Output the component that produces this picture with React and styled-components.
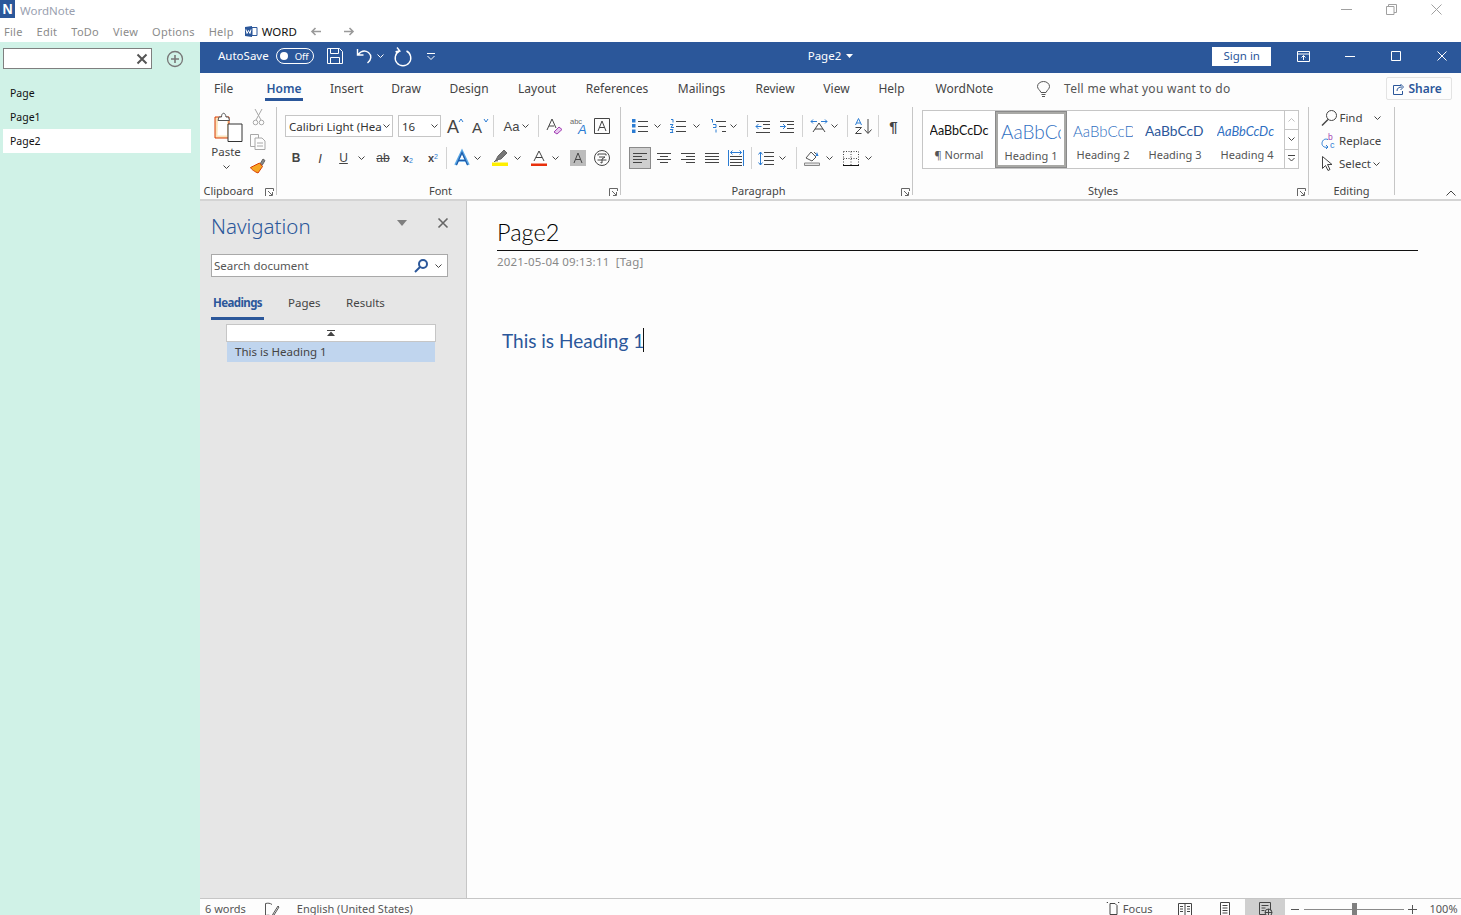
import React from 'react';
import styled, { createGlobalStyle } from 'styled-components';

const GlobalStyle = createGlobalStyle`
  html, body { margin: 0; padding: 0; background: #fff; }
  body { font-family: "Noto Sans", "Open Sans", sans-serif; }
  * { box-sizing: border-box; }
`;

const Window = styled.div`
  width: 1461px;
  height: 915px;
  overflow: hidden;
  display: flex;
  flex-direction: column;
  background: #fff;
`;

const TitleBar = styled.div`
  height: 20px;
  display: flex;
  align-items: flex-start;
`;

const Logo = styled.div`
  width: 15px;
  height: 18px;
  background: #2b579a;
  color: #fff;
  font: bold 14px/18px "Liberation Sans", sans-serif;
  text-align: center;
`;

const AppName = styled.span`
  margin-left: 5px;
  font-size: 11.5px;
  line-height: 21px;
  color: #9a9fb0;
`;

const WinControls = styled.div`
  margin-left: auto;
  display: flex;
  gap: 34px;
  padding: 4px 19px 0 0;
`;

const MenuBar = styled.div`
  height: 22px;
  display: flex;
  align-items: center;
  padding-left: 4px;
  font-size: 11px;
  color: #8b8b8b;
  letter-spacing: 0.25px;
`;

const MenuItem = styled.span`
  margin-right: 14px;
`;

const WordLink = styled.span`
  margin-left: -3px;
  display: flex;
  align-items: center;
  gap: 5px;
  color: #111;
  font-size: 11.5px;
  letter-spacing: 0;
`;

const ArrowSlot = styled.span`
  display: flex;
  margin-left: ${p => p.$ml}px;
`;

const Main = styled.div`
  flex: 1;
  min-height: 0;
  display: flex;
`;

const Sidebar = styled.aside`
  width: 200px;
  background: #d0f2e7;
  padding: 6px 0 0 3px;
`;

const SearchRow = styled.div`
  display: flex;
  align-items: center;
  height: 21px;
`;

const SideSearch = styled.div`
  width: 149px;
  height: 21px;
  background: #fff;
  border: 1px solid #7f7f7f;
  display: flex;
  align-items: center;
  justify-content: flex-end;
  padding-right: 4px;
`;

const AddButton = styled.span`
  display: flex;
  margin-left: 15px;
`;

const PageList = styled.div`
  margin-top: 12px;
  width: 188px;
`;

const PageItem = styled.div`
  height: 24px;
  line-height: 24px;
  padding-left: 7px;
  font-size: 10.5px;
  color: #111;
  background: ${p => (p.$active ? '#fff' : 'transparent')};
`;

const WordPane = styled.div`
  flex: 1;
  min-width: 0;
  display: flex;
  flex-direction: column;
`;

const BlueBar = styled.div`
  height: 31px;
  flex: none;
  background: #2b579a;
  color: #fff;
  display: flex;
  align-items: center;
  padding-bottom: 3px;
  font-size: 11.5px;
`;

const BarSlot = styled.span`
  display: flex;
  align-items: center;
  margin-left: ${p => p.$ml}px;
  padding-bottom: ${p => (p.$text ? '2px' : '0')};
`;

const Toggle = styled.span`
  width: 38px;
  height: 16px;
  border: 1px solid #fff;
  border-radius: 8px;
  display: flex;
  align-items: center;
  gap: 7px;
  padding-left: 3px;
  font-size: 9.5px;
  &::before {
    content: '';
    width: 8px;
    height: 8px;
    border-radius: 50%;
    background: #fff;
  }
`;

const SignIn = styled.span`
  width: 59px;
  height: 19px;
  margin-left: ${p => p.$ml}px;
  background: #fff;
  color: #2b579a;
  text-align: center;
  line-height: 17px;
  font-size: 11.5px;
`;

const TabRow = styled.div`
  height: 31px;
  flex: none;
  background: #fdfdfd;
  display: flex;
  align-items: flex-start;
  font-size: 12px;
  color: #444;
`;

const Tab = styled.span`
  margin-left: ${p => p.$ml}px;
  width: ${p => p.$w}px;
  height: 28px;
  text-align: center;
  line-height: 31px;
  white-space: nowrap;
  ${p => p.$active && `
    color: #2b579a;
    font-weight: 600;
    border-bottom: 3px solid #2b579a;
  `}
`;

const TellMe = styled.span`
  margin-left: 14px;
  line-height: 31px;
  color: #555;
  letter-spacing: 0.3px;
`;

const Bulb = styled.span`
  margin: 8px 0 0 42px;
  display: flex;
`;

const ShareButton = styled.span`
  margin: 4px 0 0 156px;
  width: 66px;
  height: 23px;
  border: 1px solid #e3e3e3;
  border-radius: 2px;
  color: #2b579a;
  font-weight: 600;
  display: flex;
  align-items: center;
  padding-left: 6px;
  gap: 3px;
`;

const Ribbon = styled.div`
  height: 97px;
  flex: none;
  background: #fdfdfd;
  border-bottom: 2px solid #d4d4d4;
  display: flex;
  position: relative;
`;

const Group = styled.section`
  width: ${p => p.$w}px;
  flex: none;
  display: flex;
  flex-direction: column;
  position: relative;
  padding-top: 11px;
`;

const GroupLabel = styled.div`
  position: absolute;
  left: 0;
  right: 0;
  bottom: 1px;
  height: 15px;
  line-height: 15px;
  text-align: center;
  padding-right: ${p => p.$pr || 0}px;
  font-size: 11px;
  color: #444;
`;

const Launcher = styled.span`
  position: absolute;
  right: 2px;
  bottom: 2px;
  display: flex;
`;

const GroupDivider = styled.div`
  width: 1px;
  flex: none;
  margin: 3px 0 4px;
  background: #c6c6c6;
`;

const ToolRow = styled.div`
  height: 22px;
  display: flex;
  align-items: center;
  margin-bottom: 10px;
`;

const Tool = styled.span`
  flex: none;
  display: flex;
  align-items: center;
  justify-content: center;
  width: ${p => p.$w}px;
  height: ${p => (p.$on ? '22px' : 'auto')};
  margin-left: ${p => p.$ml}px;
  background: ${p => (p.$on ? '#cfcfcf' : 'transparent')};
  border: ${p => (p.$on ? '1px solid #8a8a8a' : 'none')};
  color: #444;
`;

const ToolSep = styled.span`
  flex: none;
  width: 1px;
  height: 22px;
  margin-left: ${p => p.$ml}px;
  background: #d2d2d2;
`;

const Combo = styled.span`
  flex: none;
  height: 22px;
  width: ${p => p.$w}px;
  margin-left: ${p => p.$ml}px;
  border: 1px solid #c6c6c6;
  background: #fff;
  display: flex;
  align-items: center;
  justify-content: space-between;
  padding: 0 2px 0 3px;
  font-size: 11.5px;
  color: #333;
  white-space: nowrap;
`;

const FormatLetter = styled.span`
  font-family: "Liberation Sans", sans-serif;
  font-size: ${p => p.$size || 13}px;
  font-weight: ${p => (p.$bold ? 700 : 400)};
  font-style: ${p => (p.$italic ? 'italic' : 'normal')};
  text-decoration: ${p => p.$deco || 'none'};
  color: #444;
  line-height: 1;
`;

const Sup = styled.span`
  font-size: 7px;
  color: #2b7cd3;
  align-self: ${p => (p.$up ? 'flex-start' : 'flex-end')};
  font-family: "Liberation Sans", sans-serif;
`;

const ClipColumn = styled.div`
  display: flex;
  padding-left: 14px;
`;

const PasteColumn = styled.div`
  width: 30px;
  display: flex;
  flex-direction: column;
  margin-top: -4px;
`;

const PasteCaption = styled.div`
  width: 24px;
  display: flex;
  flex-direction: column;
  align-items: center;
  gap: 5px;
  margin-top: 2px;
  font-size: 11.5px;
  line-height: 16px;
  color: #444;
`;

const ClipTools = styled.div`
  margin: -6px 0 0 6px;
  display: flex;
  flex-direction: column;
  gap: 8px;
  align-items: center;
  width: 16px;
`;

const Gallery = styled.div`
  margin: -5px 0 0 9px;
  width: 377px;
  height: 59px;
  border: 1px solid #c6c6c6;
  background: #fff;
  display: flex;
`;

const StyleCard = styled.div`
  width: 72px;
  flex: none;
  height: 57px;
  display: flex;
  flex-direction: column;
  align-items: center;
  padding-top: ${p => (p.$active ? '8px' : '10px')};
  border: ${p => (p.$active ? '3px solid #a9a9a6' : 'none')};
  outline: ${p => (p.$active ? '1px solid #8a8a8a' : 'none')};
  outline-offset: -1px;
`;

const StylePreview = styled.div`
  width: ${p => p.$w}px;
  height: 20px;
  overflow: hidden;
  white-space: nowrap;
  line-height: 20px;
  font-family: Lato, "Liberation Sans", sans-serif;
  font-weight: ${p => p.$weight || 400};
  font-style: ${p => (p.$italic ? 'italic' : 'normal')};
  font-size: ${p => p.$size}px;
  color: ${p => p.$color};
`;

const StyleName = styled.div`
  margin-top: 6px;
  font-size: 11px;
  line-height: 16px;
  color: #555;
`;

const GalleryScroll = styled.div`
  width: 14px;
  display: flex;
  flex-direction: column;
  margin-left: auto;
`;

const ScrollBtn = styled.span`
  flex: 1;
  display: flex;
  align-items: center;
  justify-content: center;
  border-left: 1px solid #c6c6c6;
  border-top: ${p => (p.$first ? 'none' : '1px solid #c6c6c6')};
`;

const EditColumn = styled.div`
  margin-top: -9px;
`;

const EditItem = styled.div`
  height: 23px;
  display: flex;
  align-items: center;
  gap: 2px;
  padding-left: 12px;
  font-size: 11.5px;
  color: #444;
`;

const EditIcon = styled.span`
  width: 16px;
  flex: none;
  display: flex;
`;

const CollapseRibbon = styled.span`
  position: absolute;
  right: 5px;
  bottom: 3px;
  display: flex;
`;

const Workspace = styled.div`
  flex: 1;
  min-height: 0;
  display: flex;
`;

const NavPane = styled.div`
  width: 267px;
  flex: none;
  background: #e6e6e6;
  border-right: 1px solid #c6c6c6;
  padding: 0 18px 0 11px;
`;

const NavHead = styled.div`
  height: 53px;
  display: flex;
  align-items: center;
  padding-bottom: 3px;
`;

const NavTitle = styled.span`
  font-size: 20.5px;
  color: #2b579a;
  font-weight: 300;
  flex: 1;
`;

const NavHeadIcon = styled.span`
  display: flex;
  margin-right: ${p => p.$mr}px;
  margin-top: -7px;
`;

const NavSearch = styled.div`
  height: 23px;
  width: 237px;
  border: 1px solid #a9a9a9;
  background: #fff;
  display: flex;
  align-items: center;
  padding: 0 5px 0 2px;
  font-size: 11.5px;
  color: #555;
`;

const NavSearchText = styled.span`
  flex: 1;
`;

const NavTabs = styled.div`
  display: flex;
  margin-top: 16px;
  height: 27px;
  font-size: 11.5px;
  color: #444;
`;

const NavTab = styled.span`
  height: 27px;
  line-height: 19px;
  width: ${p => p.$w}px;
  margin-right: ${p => p.$mr}px;
  text-align: center;
  white-space: nowrap;
  ${p => p.$active && `
    color: #2b579a;
    font-weight: 700;
    letter-spacing: -0.6px;
    border-bottom: 3px solid #2b579a;
  `}
`;

const HeadingTree = styled.div`
  margin: 4px 0 0 15px;
  width: 210px;
`;

const CollapseAll = styled.div`
  height: 18px;
  background: #fff;
  border: 1px solid #c6c6c6;
  display: flex;
  align-items: center;
  justify-content: center;
`;

const TreeRow = styled.div`
  height: 20px;
  margin: 0 1px;
  line-height: 20px;
  padding-left: 8px;
  font-size: 11.5px;
  background: #c0d5ee;
  color: #444;
`;

const Doc = styled.main`
  flex: 1;
  min-width: 0;
  background: #fdfdfd;
  padding: 14px 43px 0 30px;
`;

const DocTitle = styled.div`
  height: 36px;
  border-bottom: 1px solid #111;
  font-family: Lato, "Liberation Sans", sans-serif;
  font-weight: 300;
  font-size: 23.5px;
  line-height: 35px;
  color: #000;
`;

const DocMeta = styled.div`
  margin-top: 3px;
  font-size: 11.5px;
  line-height: 15px;
  letter-spacing: 0.2px;
  color: #888;
  white-space: pre;
`;

const DocHeading = styled.div`
  margin: 59px 0 0 5px;
  height: 24px;
  display: flex;
  align-items: center;
  font-family: Lato, "Liberation Sans", sans-serif;
  font-weight: 400;
  font-size: 19px;
  color: #2b579a;
`;

const Caret = styled.span`
  width: 1px;
  height: 24px;
  background: #111;
  margin-left: -1px;
`;

const StatusBar = styled.footer`
  height: 21px;
  margin-bottom: -4px;
  flex: none;
  background: #fdfdfd;
  border-top: 1px solid #c6c6c6;
  display: flex;
  align-items: center;
  font-size: 11px;
  line-height: 12px;
  color: #555;
  padding-left: 5px;
`;

const StatusSlot = styled.span`
  display: flex;
  align-items: center;
  gap: 3px;
  height: 100%;
  justify-content: center;
  margin-left: ${p => p.$ml || 0}px;
  width: ${p => (p.$w ? `${p.$w}px` : 'auto')};
  background: ${p => (p.$on ? '#cfcfcf' : 'transparent')};
`;

const ZoomTrack = styled.span`
  width: 100px;
  height: 1px;
  margin-left: 5px;
  background: #8a8a8a;
  position: relative;
  &::after {
    content: '';
    position: absolute;
    left: 48px;
    top: -6px;
    width: 5px;
    height: 12px;
    background: #7f7f7f;
  }
`;

const Ico = styled.svg`
  display: block;
  flex: none;
  overflow: visible;
`;

const Svg = ({ w, h, children, stroke = '#444', fill = 'none', sw = 1 }) => (
  <Ico width={w} height={h} viewBox={`0 0 ${w} ${h}`} fill={fill} stroke={stroke} strokeWidth={sw}>
    {children}
  </Ico>
);

const Chev = ({ color = '#444' }) => (
  <Svg w={7} h={4} stroke={color}><path d="M.5.5l3 3 3-3" /></Svg>
);

const Launch = () => (
  <Svg w={9} h={9} stroke="#666">
    <path d="M.5 8V.5H8.500V3M3 3l4 4M4 7.500h3.500V4" />
  </Svg>
);

// word icons
const Lines = ({ rows, x1 = 0, x2 = 14 }) => (
  <path d={rows.map(([y, a = x1, b = x2]) => `M${a} ${y}.5H${b}`).join('')} />
);

const Undo = () => (
  <Svg w={18} h={18} stroke="#fff" sw={1.4}>
    <path d="M1.500 2v6h6M2 7.500C5 4 9 3 12.500 5.500c3.500 3 3 7-1 10.500" />
  </Svg>
);

const Redo = () => (
  <Svg w={18} h={18} stroke="#fff" sw={1.4}>
    <path d="M12.500 4a7.800 7.800 0 1 1-7 0M3 .5l2.800 3.500-4.300.8" />
  </Svg>
);

const AIcon = ({ arrow, size = 18 }) => (
  <Svg w={16} h={16} stroke="none">
    <text x="0" y="15" fontFamily="Liberation Sans" fontSize={size} fill="#444">A</text>
    <path d={arrow === 'up' ? 'M12 4l2-3 2 3' : 'M12 1l2 3 2-3'} fill="none" stroke="#2b7cd3" />
  </Svg>
);

const TextEffect = () => (
  <Svg w={16} h={16} stroke="#59a8e6" sw={2.6}>
    <path d="M1.500 15L8 1.500 14.500 15M4.500 10.500h7" />
    <path d="M2.500 15L8 2.500 13.500 15M4.500 10.500h7" stroke="#1f5aa8" strokeWidth={1.2} />
  </Svg>
);

const ColorA = ({ bar }) => (
  <Svg w={16} h={16} stroke="#444">
    <path d="M3 11L8 1l5 10M5 7.500h6" />
    <path d="M0 13.500h16v2.500H0z" fill={bar} stroke="none" />
  </Svg>
);

const Highlight = () => (
  <Svg w={16} h={16} stroke="#666">
    <path d="M4 10l2-4 6-6 3 3-6 6zM2 12l2-2 2 1" fill="#777" />
    <path d="M0 12.500h16V16H0z" fill="#ffef00" stroke="none" />
  </Svg>
);

const Bullets = () => (
  <Svg w={16} h={14}>
    <Lines rows={[[2, 6, 16], [7, 6, 16], [12, 6, 16]]} />
    <path d="M0 0h3.500v3.500H0zM0 5h3.500v3.500H0zM0 10.500h3.500V14H0z" fill="#2b7cd3" stroke="none" />
  </Svg>
);

const Numbers = () => (
  <Svg w={16} h={14}>
    <Lines rows={[[2, 6, 16], [7, 6, 16], [12, 6, 16]]} />
    <path d="M1 .5h2v3M0 5.500h3l-2 3h3M0 10.500h3l-1 1.500 1 1.500H0" stroke="#2b7cd3" />
  </Svg>
);

const Multilevel = () => (
  <Svg w={16} h={14}>
    <Lines rows={[[2, 6, 16], [7, 9, 16], [12, 12, 16]]} />
    <path d="M1 .5h1.500v3M3 5.500h3v3H3M6 10.500v3" stroke="#2b7cd3" />
  </Svg>
);

const Indent = ({ rev }) => (
  <Svg w={14} h={13}>
    <Lines rows={[[1], [4, 7, 14], [8, 7, 14], [12]]} />
    <path d={rev ? 'M5.500 6.500H0M2.500 4L0 6.500 2.500 9' : 'M0 6.500h5.500M3 4l2.500 2.500L3 9'} stroke="#2b7cd3" />
  </Svg>
);

const Asian = () => (
  <Svg w={18} h={14}>
    <path d="M3 13L9 4l6 9M5 10h8" />
    <path d="M1 2.500h6M3 .5l-2 2 2 2M17 2.500h-6M15 .5l2 2-2 2" stroke="#2b7cd3" />
  </Svg>
);

const Sort = () => (
  <Svg w={17} h={16} stroke="#444">
    <path d="M.5 7L3.500 .5 6.500 7M1.500 5h4" stroke="#2b7cd3" />
    <path d="M.5 9.500h6L.5 15.500h6M13 1v14M9.500 11.500L13 15.500l3.500-4" />
  </Svg>
);

const Align = ({ rows }) => (
  <Svg w={14} h={12}><Lines rows={rows} /></Svg>
);

const Distributed = () => (
  <Svg w={16} h={16}>
    <Lines rows={[[6, 2, 14], [9, 2, 14], [12, 2, 14], [15, 2, 14]]} />
    <path d="M.5 0v16M15.500 0v16M2.500 2.500h11M4.500 .5l-2 2 2 2M11.500 .5l2 2-2 2" stroke="#2b7cd3" />
  </Svg>
);

const LineSpacing = () => (
  <Svg w={16} h={15}>
    <Lines rows={[[1, 6, 16], [5, 6, 16], [9, 6, 16], [13, 6, 16]]} />
    <path d="M2.500 1v13M.5 3.500l2-2.500 2 2.500M.5 11.500l2 2.500 2-2.500" stroke="#2b7cd3" />
  </Svg>
);

const Shading = () => (
  <Svg w={16} h={16} stroke="#555">
    <path d="M2 8l5-6 5 5-4 4zM10 2l2 2" />
    <path d="M13 2l1.500 4-3 0z" fill="#2b7cd3" stroke="none" />
    <path d="M.5 13h15v2.500H.5z" fill="#e6e6e6" stroke="#888" />
  </Svg>
);

const Borders = () => (
  <Svg w={16} h={15}>
    <path d="M.5 .5h15M.5 .5v14M15.500 .5v14M8 .5v14M.5 7.500h15" strokeDasharray="1 1.500" />
    <path d="M0 14.500h16" stroke="#111" />
  </Svg>
);

const Paste = () => (
  <Svg w={30} h={31} stroke="#555">
    <path d="M1 6h14v21H1z" fill="#fbe3bb" stroke="#d83b01" />
    <path d="M4 7.500h9v17H3.500z" fill="#fff" stroke="none" />
    <path d="M5 6h2.500c0-5 4-5 4.500 0h2.500l1 3.500H4z" fill="#fff" />
    <path d="M14 13h14v17.500H14z" fill="#fff" stroke="#333" />
  </Svg>
);

const Scissors = () => (
  <Svg w={11} h={17} stroke="#a8a8a8">
    <path d="M2 0l6 11M9 0L3 11" />
    <circle cx="2.500" cy="13.500" r="2.300" />
    <circle cx="8.500" cy="13.500" r="2.300" />
  </Svg>
);

const Copy = () => (
  <Svg w={16} h={16} stroke="#a8a8a8">
    <path d="M.5 .5h8v12H.5z" />
    <path d="M5 4h7l3 3v8.500H5z" fill="#fdfdfd" />
    <path d="M7 9h6M7 12h6" />
  </Svg>
);

const Painter = () => (
  <Svg w={16} h={16} stroke="#666">
    <path d="M10 6l3-5 2 1.500-3 5z" fill="#888" />
    <path d="M3.500 8l6-3 3 3.500-4.500 6.500C5 14 1 11 .5 9.500z" fill="#f6a623" stroke="#d83b01" />
  </Svg>
);

const Search = () => (
  <Svg w={14} h={14} stroke="#2b579a" sw={2}>
    <circle cx="9" cy="5" r="4" />
    <path d="M6 8l-5 5" />
  </Svg>
);

const Find = () => (
  <Svg w={16} h={16} stroke="#444">
    <circle cx="10.500" cy="5.500" r="5" />
    <path d="M7 9.500l-6 6" strokeWidth={1.4} />
  </Svg>
);

const Close = ({ size = 10, color = '#555', sw = 1.6 }) => (
  <Svg w={size} h={size} stroke={color} sw={sw}>
    <path d={`M.5 .5L${size - 0.5} ${size - 0.5}M${size - 0.5} .5L.5 ${size - 0.5}`} />
  </Svg>
);

const Row1Font = () => (
  <ToolRow>
    <Combo $w={108} $ml={8}>
      Calibri Light (Hea
      <Chev />
    </Combo>
    <Combo $w={43} $ml={5}>
      16
      <Chev />
    </Combo>
    <Tool $w={16} $ml={6}><AIcon arrow="up" /></Tool>
    <Tool $w={16} $ml={9}><AIcon arrow="down" size={15} /></Tool>
    <ToolSep $ml={5} />
    <Tool $w={19} $ml={8}><FormatLetter $size={13}>Aa</FormatLetter></Tool>
    <Tool $w={7} $ml={1}><Chev /></Tool>
    <ToolSep $ml={9} />
    <Tool $w={16} $ml={7}>
      <Svg w={16} h={16}>
        <path d="M1 12L6 1l4 9M3 8h5" />
        <path d="M8 14l5-5 3 2.500-5 4.500z" fill="#e6c6ee" stroke="#a33fb3" />
      </Svg>
    </Tool>
    <Tool $w={17} $ml={8}>
      <Svg w={17} h={16} stroke="none">
        <text x="0" y="6" fontFamily="Liberation Sans" fontSize="7.500" fill="#666">abc</text>
        <text x="8" y="16" fontFamily="Liberation Sans" fontStyle="italic" fontSize="13" fill="#2b7cd3">A</text>
      </Svg>
    </Tool>
    <Tool $w={16} $ml={7}>
      <Svg w={16} h={16}>
        <path d="M.5 .5h15v15H.5z" />
        <path d="M4 13l4-10 4 10M5.500 9.500h5" />
      </Svg>
    </Tool>
  </ToolRow>
);

const Row2Font = () => (
  <ToolRow>
    <Tool $w={10} $ml={14}><FormatLetter $bold $size={12}>B</FormatLetter></Tool>
    <Tool $w={8} $ml={15}><FormatLetter $italic $size={13}>I</FormatLetter></Tool>
    <Tool $w={11} $ml={14}><FormatLetter $deco="underline" $size={12}>U</FormatLetter></Tool>
    <Tool $w={7} $ml={9}><Chev /></Tool>
    <Tool $w={16} $ml={10}><FormatLetter $deco="line-through" $size={12}>ab</FormatLetter></Tool>
    <Tool $w={12} $ml={11}><FormatLetter $bold $size={11}>x</FormatLetter><Sup>2</Sup></Tool>
    <Tool $w={12} $ml={13}><FormatLetter $bold $size={11}>x</FormatLetter><Sup $up>2</Sup></Tool>
    <ToolSep $ml={7} />
    <Tool $w={16} $ml={7}><TextEffect /></Tool>
    <Tool $w={7} $ml={4}><Chev /></Tool>
    <Tool $w={16} $ml={11}><Highlight /></Tool>
    <Tool $w={7} $ml={6}><Chev /></Tool>
    <Tool $w={16} $ml={10}><ColorA bar="#e8300c" /></Tool>
    <Tool $w={7} $ml={5}><Chev /></Tool>
    <Tool $w={16} $ml={11}>
      <Svg w={16} h={16} stroke="#444">
        <path d="M0 0h16v16H0z" fill="#bcbcbc" stroke="none" />
        <path d="M4 13l4-10 4 10M5.500 9.500h5" />
      </Svg>
    </Tool>
    <Tool $w={16} $ml={8}>
      <Svg w={16} h={16}>
        <circle cx="8" cy="8" r="7.500" />
        <path d="M4 5.500V4h8v1.500M5 7h6l-3 2v4l-1.500-.5M3.500 10h9" />
      </Svg>
    </Tool>
  </ToolRow>
);

const Row1Para = () => (
  <ToolRow>
    <Tool $w={16} $ml={11}><Bullets /></Tool>
    <Tool $w={7} $ml={6}><Chev /></Tool>
    <Tool $w={16} $ml={9}><Numbers /></Tool>
    <Tool $w={7} $ml={7}><Chev /></Tool>
    <Tool $w={16} $ml={10}><Multilevel /></Tool>
    <Tool $w={7} $ml={4}><Chev /></Tool>
    <ToolSep $ml={10} />
    <Tool $w={14} $ml={8}><Indent rev /></Tool>
    <Tool $w={14} $ml={10}><Indent /></Tool>
    <ToolSep $ml={8} />
    <Tool $w={18} $ml={7}><Asian /></Tool>
    <Tool $w={7} $ml={3}><Chev /></Tool>
    <ToolSep $ml={9} />
    <Tool $w={17} $ml={7}><Sort /></Tool>
    <ToolSep $ml={6} />
    <Tool $w={11} $ml={9}><FormatLetter $bold $size={15}>¶</FormatLetter></Tool>
  </ToolRow>
);

const Row2Para = () => (
  <ToolRow>
    <Tool $w={22} $ml={8} $on>
      <Align rows={[[1], [4, 0, 9], [7], [10, 0, 9]]} />
    </Tool>
    <Tool $w={14} $ml={6}><Align rows={[[1], [4, 3, 11], [7], [10, 3, 11]]} /></Tool>
    <Tool $w={14} $ml={10}><Align rows={[[1], [4, 5, 14], [7], [10, 5, 14]]} /></Tool>
    <Tool $w={14} $ml={10}><Align rows={[[1], [4], [7], [10]]} /></Tool>
    <Tool $w={16} $ml={9}><Distributed /></Tool>
    <ToolSep $ml={7} />
    <Tool $w={16} $ml={6}><LineSpacing /></Tool>
    <Tool $w={7} $ml={5}><Chev /></Tool>
    <ToolSep $ml={10} />
    <Tool $w={16} $ml={7}><Shading /></Tool>
    <Tool $w={7} $ml={6}><Chev /></Tool>
    <Tool $w={16} $ml={10}><Borders /></Tool>
    <Tool $w={7} $ml={6}><Chev /></Tool>
  </ToolRow>
);

const App = () => (
  <Window>
    <GlobalStyle />
    <TitleBar>
      <Logo>N</Logo>
      <AppName>WordNote</AppName>
      <WinControls>
        <Svg w={11} h={11} stroke="#a0a0a0"><path d="M0 5.500h11" /></Svg>
        <Svg w={11} h={11} stroke="#a0a0a0"><path d="M.5 2.500h7.500v8H.5zM2.500 2.500V.5h8v8H8" /></Svg>
        <Close size={11} color="#a0a0a0" sw={1} />
      </WinControls>
    </TitleBar>
    <MenuBar>
      <MenuItem>File</MenuItem>
      <MenuItem>Edit</MenuItem>
      <MenuItem>ToDo</MenuItem>
      <MenuItem>View</MenuItem>
      <MenuItem>Options</MenuItem>
      <MenuItem>Help</MenuItem>
      <WordLink>
        <Svg w={12} h={11} stroke="none">
          <path d="M0 1l7-1v11l-7-1z" fill="#2b579a" />
          <path d="M7 1.500h5v8H7z" fill="#fff" stroke="#2b579a" />
          <path d="M1 3.500l1 4 1.500-3 1.500 3 1-4" fill="none" stroke="#fff" />
        </Svg>
        WORD
      </WordLink>
      <ArrowSlot $ml={14}>
        <Svg w={10} h={9} stroke="#9a9a9a" sw={1.6}><path d="M10 4.500H1M4.500 1L1 4.500 4.500 8" /></Svg>
      </ArrowSlot>
      <ArrowSlot $ml={23}>
        <Svg w={10} h={9} stroke="#9a9a9a" sw={1.6}><path d="M0 4.500h9M5.500 1L9 4.500 5.500 8" /></Svg>
      </ArrowSlot>
    </MenuBar>
    <Main>
      <Sidebar>
        <SearchRow>
          <SideSearch><Close size={10} color="#555" sw={2} /></SideSearch>
          <AddButton>
            <Svg w={16} h={16} stroke="#777" sw={1.3}>
              <circle cx="8" cy="8" r="7.500" />
              <path d="M8 4v8M4 8h8" strokeWidth={1.6} />
            </Svg>
          </AddButton>
        </SearchRow>
        <PageList>
          <PageItem>Page</PageItem>
          <PageItem>Page1</PageItem>
          <PageItem $active>Page2</PageItem>
        </PageList>
      </Sidebar>
      <WordPane>
        <BlueBar>
          <BarSlot $ml={18} $text>AutoSave</BarSlot>
          <BarSlot $ml={7}><Toggle>Off</Toggle></BarSlot>
          <BarSlot $ml={13}>
            <Svg w={16} h={16} stroke="#fff">
              <path d="M.5 .5h12l3 3v12H.5zM3.500 .5v5h8v-5M3.500 15.500v-6h9v6" />
            </Svg>
          </BarSlot>
          <BarSlot $ml={13}><Undo /></BarSlot>
          <BarSlot $ml={3}><Chev color="#fff" /></BarSlot>
          <BarSlot $ml={10}><Redo /></BarSlot>
          <BarSlot $ml={15}>
            <Svg w={8} h={7} stroke="#fff"><path d="M0 .5h8M.5 3l3.500 3.500L7.500 3" /></Svg>
          </BarSlot>
          <BarSlot $ml={373} $text>Page2</BarSlot>
          <BarSlot $ml={5}>
            <Svg w={7} h={4} stroke="none" fill="#fff"><path d="M0 0h7L3.500 4z" /></Svg>
          </BarSlot>
          <SignIn $ml={359}>Sign in</SignIn>
          <BarSlot $ml={26}>
            <Svg w={13} h={11} stroke="#fff">
              <path d="M.5 .5h12v10H.5zM.5 3h12M6.500 9V4.500M4.500 6.500l2-2 2 2" />
            </Svg>
          </BarSlot>
          <BarSlot $ml={35}><Svg w={10} h={1} stroke="#fff"><path d="M0 .5h10" /></Svg></BarSlot>
          <BarSlot $ml={36}><Svg w={10} h={10} stroke="#fff"><path d="M.5 .5h9v9h-9z" /></Svg></BarSlot>
          <BarSlot $ml={36}><Close size={10} color="#fff" sw={1} /></BarSlot>
        </BlueBar>
        <TabRow>
          <Tab $ml={14} $w={19}>File</Tab>
          <Tab $ml={32} $w={38} $active>Home</Tab>
          <Tab $ml={27} $w={32}>Insert</Tab>
          <Tab $ml={29} $w={30}>Draw</Tab>
          <Tab $ml={28} $w={40}>Design</Tab>
          <Tab $ml={29} $w={38}>Layout</Tab>
          <Tab $ml={29} $w={64}>References</Tab>
          <Tab $ml={28} $w={49}>Mailings</Tab>
          <Tab $ml={29} $w={40}>Review</Tab>
          <Tab $ml={28} $w={27}>View</Tab>
          <Tab $ml={28} $w={27}>Help</Tab>
          <Tab $ml={29} $w={61}>WordNote</Tab>
          <Bulb>
            <Svg w={13} h={16} stroke="#555">
              <path d="M4 11.500C3 9 .5 8 .5 5.500a6 5 0 0 1 12 0c0 2.500-2.500 3.500-3.500 6zM4.500 13.500h4M5 15.500h3" />
            </Svg>
          </Bulb>
          <TellMe>Tell me what you want to do</TellMe>
          <ShareButton>
            <Svg w={12} h={12} stroke="#2b579a">
              <path d="M8 2.500H.5v9h9V8M4 8c0-3 2-4 5-4M7.500 1L10.500 4 7.500 7" />
            </Svg>
            Share
          </ShareButton>
        </TabRow>
        <Ribbon>
          <Group $w={76}>
            <ClipColumn>
              <PasteColumn>
                <Paste />
                <PasteCaption>
                  Paste
                  <Chev />
                </PasteCaption>
              </PasteColumn>
              <ClipTools>
                <Scissors />
                <Copy />
                <Painter />
              </ClipTools>
            </ClipColumn>
            <GroupLabel $pr={19}>Clipboard</GroupLabel>
            <Launcher><Launch /></Launcher>
          </Group>
          <GroupDivider />
          <Group $w={343}>
            <Row1Font />
            <Row2Font />
            <GroupLabel $pr={16}>Font</GroupLabel>
            <Launcher><Launch /></Launcher>
          </Group>
          <GroupDivider />
          <Group $w={291}>
            <Row1Para />
            <Row2Para />
            <GroupLabel $pr={16}>Paragraph</GroupLabel>
            <Launcher><Launch /></Launcher>
          </Group>
          <GroupDivider />
          <Group $w={395}>
            <Gallery>
              <StyleCard>
                <StylePreview $w={59} $size={12.5} $color="#111">AaBbCcDc</StylePreview>
                <StyleName>¶ Normal</StyleName>
              </StyleCard>
              <StyleCard $active>
                <StylePreview $w={60} $size={19} $weight={300} $color="#2f6fc2">AaBbCc</StylePreview>
                <StyleName>Heading 1</StyleName>
              </StyleCard>
              <StyleCard>
                <StylePreview $w={60} $size={15} $weight={300} $color="#2f6fc2">AaBbCcD</StylePreview>
                <StyleName>Heading 2</StyleName>
              </StyleCard>
              <StyleCard>
                <StylePreview $w={60} $size={13.8} $color="#2b579a">AaBbCcD</StylePreview>
                <StyleName>Heading 3</StyleName>
              </StyleCard>
              <StyleCard>
                <StylePreview $w={60} $size={12.8} $italic $color="#2f6fc2">AaBbCcDc</StylePreview>
                <StyleName>Heading 4</StyleName>
              </StyleCard>
              <GalleryScroll>
                <ScrollBtn $first><Svg w={7} h={4} stroke="#c0c0c0"><path d="M.5 3.500l3-3 3 3" /></Svg></ScrollBtn>
                <ScrollBtn><Chev /></ScrollBtn>
                <ScrollBtn>
                  <Svg w={7} h={7}><path d="M0 .5h7M.5 3l3 3 3-3" /></Svg>
                </ScrollBtn>
              </GalleryScroll>
            </Gallery>
            <GroupLabel $pr={15}>Styles</GroupLabel>
            <Launcher><Launch /></Launcher>
          </Group>
          <GroupDivider />
          <Group $w={85}>
            <EditColumn>
              <EditItem>
                <EditIcon><Find /></EditIcon>
                <Tool $w={24} $ml={0}>Find</Tool>
                <Tool $w={7} $ml={9}><Chev /></Tool>
              </EditItem>
              <EditItem>
                <EditIcon>
                  <Svg w={16} h={16} stroke="none">
                    <text x="7" y="7" fontFamily="Liberation Sans" fontSize="8.500" fill="#a33fb3">b</text>
                    <text x="9" y="15" fontFamily="Liberation Sans" fontSize="9" fill="#2b7cd3">c</text>
                    <path d="M7 6.500C3 5 1 8 1 10.500c0 3 3 4.500 6 3.500M5 12l2 2-2 2" fill="none" stroke="#2b7cd3" />
                  </Svg>
                </EditIcon>
                Replace
              </EditItem>
              <EditItem>
                <EditIcon>
                  <Svg w={14} h={15} fill="#fdfdfd">
                    <path d="M1.500 .5v12l3-3 2.500 5 2-1-2.500-5h4.500z" />
                  </Svg>
                </EditIcon>
                Select <Chev />
              </EditItem>
            </EditColumn>
            <GroupLabel>Editing</GroupLabel>
          </Group>
          <GroupDivider />
          <CollapseRibbon>
            <Svg w={10} h={6} stroke="#444"><path d="M.5 5.500L5 1l4.500 4.500" /></Svg>
          </CollapseRibbon>
        </Ribbon>
        <Workspace>
          <NavPane>
            <NavHead>
              <NavTitle>Navigation</NavTitle>
              <NavHeadIcon $mr={31}>
                <Svg w={10} h={6} stroke="none" fill="#7f7f7f"><path d="M0 0h10L5 6z" /></Svg>
              </NavHeadIcon>
              <NavHeadIcon $mr={0}><Close size={10} color="#666" sw={1.6} /></NavHeadIcon>
            </NavHead>
            <NavSearch>
              <NavSearchText>Search document</NavSearchText>
              <Search />
              <Tool $w={7} $ml={7}><Chev /></Tool>
            </NavSearch>
            <NavTabs>
              <NavTab $w={53} $mr={24} $active>Headings</NavTab>
              <NavTab $w={32} $mr={26}>Pages</NavTab>
              <NavTab $w={38} $mr={0}>Results</NavTab>
            </NavTabs>
            <HeadingTree>
              <CollapseAll>
                <Svg w={8} h={6} stroke="none" fill="#444"><path d="M0 0h8v1H0zM4 1.500L8 6H0z" /></Svg>
              </CollapseAll>
              <TreeRow>This is Heading 1</TreeRow>
            </HeadingTree>
          </NavPane>
          <Doc>
            <DocTitle>Page2</DocTitle>
            <DocMeta>2021-05-04 09:13:11  [Tag]</DocMeta>
            <DocHeading>This is Heading 1<Caret /></DocHeading>
          </Doc>
        </Workspace>
        <StatusBar>
          <StatusSlot>6 words</StatusSlot>
          <StatusSlot $ml={19}>
            <Svg w={14} h={14} stroke="#555">
              <path d="M7 2.500C5 1 3 1 .5 1.500v12c2.500-.5 4.500-.5 6.500 1 1-1 2-1.200 3-1.200" />
              <path d="M8 12l5-8 1 1-5 8-2 1z" fill="#fdfdfd" />
            </Svg>
          </StatusSlot>
          <StatusSlot $ml={18}>English (United States)</StatusSlot>
          <StatusSlot $ml={693}>
            <Svg w={14} h={14}>
              <path d="M4 1.500h5l2 2v9H4zM1 1V.5h1M1 13v.5h1M13 1v-.5h-1M13 13v.5h-1" />
            </Svg>
            Focus
          </StatusSlot>
          <StatusSlot $ml={25}>
            <Svg w={14} h={13}><path d="M.5 .5h13v12H.5zM7 .5v12M2 3.500h3M2 6h3M2 8.500h3M9 3.500h3M9 6h3M9 8.500h3" /></Svg>
          </StatusSlot>
          <StatusSlot $ml={26}>
            <Svg w={14} h={14}><path d="M2.500 .5h9v13h-9zM4.500 3.500h5M4.500 6h5M4.500 8.500h5M4.500 11h5" /></Svg>
          </StatusSlot>
          <StatusSlot $ml={13} $w={40} $on>
            <Svg w={14} h={14}>
              <path d="M1.500 .5h11v8M1.500 .5v12h6M3.500 3.500h7M3.500 6h4M3.500 8.500h3" />
              <circle cx="10.500" cy="10.500" r="3.500" />
              <path d="M7 10.500h7M10.500 7v7" />
            </Svg>
          </StatusSlot>
          <StatusSlot $ml={6}><Svg w={8} h={1} stroke="#555"><path d="M0 .5h8" /></Svg></StatusSlot>
          <ZoomTrack />
          <StatusSlot $ml={4}><Svg w={9} h={9} stroke="#555"><path d="M0 4.500h9M4.500 0v9" /></Svg></StatusSlot>
          <StatusSlot $ml={13}>100%</StatusSlot>
        </StatusBar>
      </WordPane>
    </Main>
  </Window>
);

export default App;
